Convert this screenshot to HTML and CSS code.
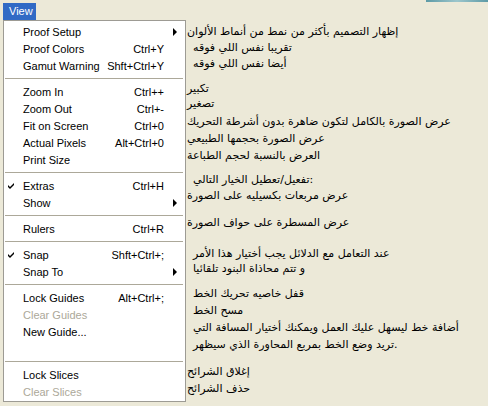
FILE: index.html
```html
<!DOCTYPE html>
<html lang="ar">
<head>
    <meta charset="UTF-8">
    <title>View menu</title>
    <link rel="stylesheet" href="styles.css">
</head>
<body>
    <div class="edge"></div>
    <div class="menubar" dir="ltr">
        <span class="menu-title" lang="en">View</span>
    </div>
    <div class="stage" dir="ltr">
        <div class="menu" lang="en">
            <div class="item"><span></span><span>Proof Setup</span><span></span><span class="arrow"></span></div>
            <div class="item"><span></span><span>Proof Colors</span><span>Ctrl+Y</span><span></span></div>
            <div class="item"><span></span><span>Gamut Warning</span><span>Shft+Ctrl+Y</span><span></span></div>
            <div class="sep"></div>
            <div class="item"><span></span><span>Zoom In</span><span>Ctrl++</span><span></span></div>
            <div class="item"><span></span><span>Zoom Out</span><span>Ctrl+-</span><span></span></div>
            <div class="item"><span></span><span>Fit on Screen</span><span>Ctrl+0</span><span></span></div>
            <div class="item"><span></span><span>Actual Pixels</span><span>Alt+Ctrl+0</span><span></span></div>
            <div class="item"><span></span><span>Print Size</span><span></span><span></span></div>
            <div class="sep"></div>
            <div class="item">
                <span class="check"><svg width="7" height="7" viewBox="0 0 7 7"><path d="M0 3 L2 5 L6 1 V3 L2 7 L0 5 Z" fill="#000"/></svg></span>
                <span>Extras</span><span>Ctrl+H</span><span></span>
            </div>
            <div class="item"><span></span><span>Show</span><span></span><span class="arrow"></span></div>
            <div class="sep"></div>
            <div class="item"><span></span><span>Rulers</span><span>Ctrl+R</span><span></span></div>
            <div class="sep"></div>
            <div class="item">
                <span class="check"><svg width="7" height="7" viewBox="0 0 7 7"><path d="M0 3 L2 5 L6 1 V3 L2 7 L0 5 Z" fill="#000"/></svg></span>
                <span>Snap</span><span>Shft+Ctrl+;</span><span></span>
            </div>
            <div class="item"><span></span><span>Snap To</span><span></span><span class="arrow"></span></div>
            <div class="sep"></div>
            <div class="item"><span></span><span>Lock Guides</span><span>Alt+Ctrl+;</span><span></span></div>
            <div class="item disabled"><span></span><span>Clear Guides</span><span></span><span></span></div>
            <div class="item"><span></span><span>New Guide...</span><span></span><span></span></div>
            <div class="item"></div>
            <div class="sep"></div>
            <div class="item"><span></span><span>Lock Slices</span><span></span><span></span></div>
            <div class="item disabled"><span></span><span>Clear Slices</span><span></span><span></span></div>
        </div>

        <div class="notes">
            <div class="group g1">
                <p><span>إظهار</span> <span>التصميم</span> <span>بأكثر</span> <span>من</span> <span>نمط</span> <span>من</span> <span>أنماط</span> <span>الألوان</span></p>
                <p class="indent"><span>تقريبا</span> <span>نفس</span> <span>اللي</span> <span>فوقه</span></p>
                <p class="indent"><span>أيضا</span> <span>نفس</span> <span>اللي</span> <span>فوقه</span></p>
            </div>
            <div class="group g2">
                <p><span>تكبير</span></p>
                <p><span>تصغير</span></p>
            </div>
            <div class="group g3">
                <p><span>عرض</span> <span>الصورة</span> <span>بالكامل</span> <span>لتكون</span> <span>ضاهرة</span> <span>بدون</span> <span>أشرطة</span> <span>التحريك</span></p>
                <p><span>عرض</span> <span>الصورة</span> <span>بحجمها</span> <span>الطبيعي</span></p>
                <p><span>العرض</span> <span>بالنسبة</span> <span>لحجم</span> <span>الطباعة</span></p>
            </div>
            <div class="group g4">
                <p class="indent"><span>تفعيل</span>/<span>تعطيل</span> <span>الخيار</span> <span>التالي</span>:</p>
                <p><span>عرض</span> <span>مربعات</span> <span>بكسيليه</span> <span>على</span> <span>الصورة</span></p>
            </div>
            <div class="group g5">
                <p><span>عرض</span> <span>المسطرة</span> <span>على</span> <span>حواف</span> <span>الصورة</span></p>
            </div>
            <div class="group g6">
                <p class="indent"><span>عند</span> <span>التعامل</span> <span>مع</span> <span>الدلائل</span> <span>يجب</span> <span>أختيار</span> <span>هذا</span> <span>الأمر</span></p>
                <p class="indent"><span>و</span> <span>تتم</span> <span>محاذاة</span> <span>البنود</span> <span>تلقائيا</span></p>
            </div>
            <div class="group g7">
                <p class="indent"><span>قفل</span> <span>خاصيه</span> <span>تحريك</span> <span>الخط</span></p>
                <p class="indent"><span>مسح</span> <span>الخط</span></p>
                <p class="indent"><span>أضافة</span> <span>خط</span> <span>ليسهل</span> <span>عليك</span> <span>العمل</span> <span>ويمكنك</span> <span>أختيار</span> <span>المسافة</span> <span>التي</span></p>
                <p class="indent"><span>تريد</span> <span>وضع</span> <span>الخط</span> <span>بمربع</span> <span>المحاورة</span> <span>الذي</span> <span>سيظهر</span>.</p>
            </div>
            <div class="group g8">
                <p><span>إغلاق</span> <span>الشرائح</span></p>
                <p><span>حذف</span> <span>الشرائح</span></p>
            </div>
        </div>
    </div>
</body>
</html>
```

FILE: styles.css
```css
body {
    margin: 0;
    width: 488px;
    height: 406px;
    overflow: hidden;
    position: relative;
    background: #ece9d8;
    font-family: 'Liberation Sans', Arial, sans-serif;
    font-size: 11px;
    color: #000;
}
.edge {
    position: absolute;
    top: 0;
    right: 0;
    width: 62px;
    height: 2px;
    background: linear-gradient(to right, #5d9aa6, #9cc6cc 50%, #5d9aa6);
}
.menubar {
    padding: 3px 0 0 3px;
    height: 17px;
}
.menu-title {
    display: inline-block;
    width: 27px;
    height: 17px;
    line-height: 16px;
    padding-left: 6px;
    background: #316ac5;
    color: #fff;
}
.stage {
    display: flex;
    align-items: flex-start;
    padding-left: 3px;
}
.menu {
    width: 181px;
    flex: none;
    background: #fff;
    border: 1px solid #9d9b94;
    padding: 2px 0 1px;
}
.item {
    display: grid;
    grid-template-columns: 19px 1fr auto 21px;
    align-items: center;
    height: 17px;
    white-space: nowrap;
}
.item.disabled {
    color: #aca899;
}
.check {
    padding-left: 4px;
    display: flex;
}
.arrow {
    width: 0;
    height: 0;
    margin-left: 9px;
    border-left: 4px solid #000;
    border-top: 4px solid transparent;
    border-bottom: 4px solid transparent;
}
.sep {
    height: 1px;
    margin: 4px 2px 4px 1px;
    background: #aca899;
}
.notes {
    margin-left: 1px;
    font-family: 'DejaVu Sans', sans-serif;
    font-size: 11px;
    white-space: nowrap;
}
.notes p {
    margin: 0;
}
.indent {
    padding-left: 6px;
}
.g1 { margin-top: 4px; line-height: 16px; }
.g2 { margin-top: 9px; line-height: 15px; }
.g3 { margin-top: 2px; line-height: 17px; }
.g4 { margin-top: 8px; line-height: 16px; }
.g5 { margin-top: 10px; line-height: 17px; }
.g6 { margin-top: 15px; line-height: 15px; }
.g7 { margin-top: 9px; line-height: 17px; }
.g8 { margin-top: 10px; line-height: 17px; }
```
